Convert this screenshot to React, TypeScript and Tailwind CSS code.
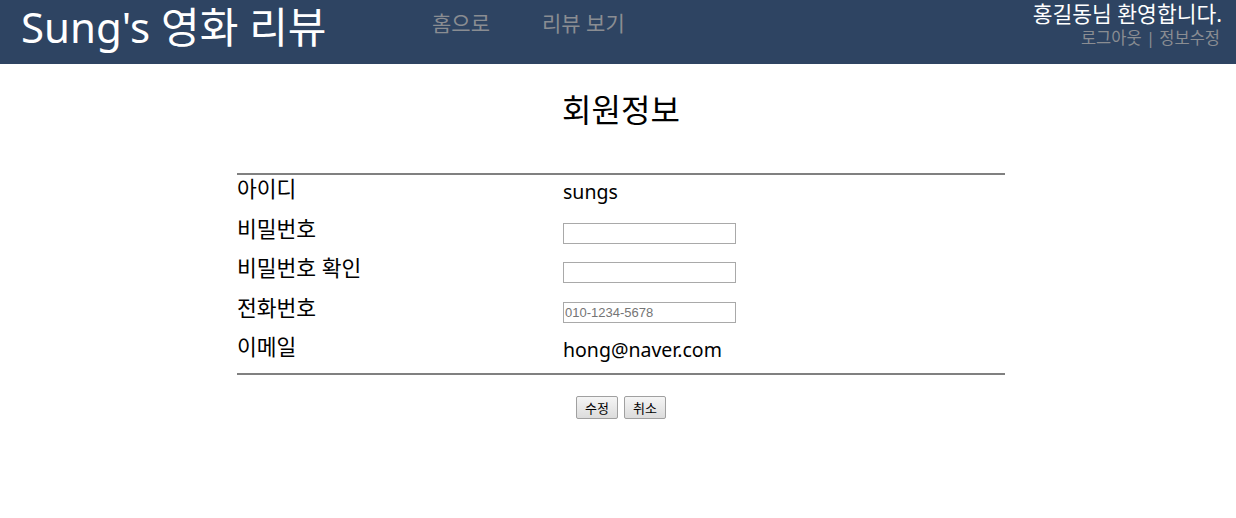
import React from "react";

const font = { fontFamily: '"Noto Sans", "Noto Sans CJK KR", sans-serif' };

export default function App() {
  return (
    <div className="w-[1236px] min-h-[518px] bg-white" style={font}>
      <header className="h-[64px] bg-[#2e4462] flex items-start">
        <div className="w-[410px] pl-[21px] pt-[0px] text-[42px] leading-[54px] text-white whitespace-nowrap">
          Sung's 영화 리뷰
        </div>
        <nav className="flex pt-[8px] text-[21px] leading-[30px] text-[#8a8d92]">
          <a className="ml-[22px] w-[110px]">홈으로</a>
          <a>리뷰 보기</a>
        </nav>
        <div className="ml-auto pr-[14px] flex flex-col items-end">
          <div className="text-[21.5px] leading-[27px] text-white">홍길동님 환영합니다.</div>
          <div className="text-[16.5px] leading-[22px] pr-[2px] text-[#8a8d92]">로그아웃 | 정보수정</div>
        </div>
      </header>
      <main className="flex flex-col items-center pl-[6px]">
        <h1 className="mt-[24px] text-[32px] leading-[44px] text-black">회원정보</h1>
        <div className="mt-[41px] w-[768px] border-y-2 border-[#808080]">
          {[
            ["아이디", <span className="text-[19.5px]">sungs</span>],
            ["비밀번호", <input type="password" className="w-[173px] h-[21px] border border-[#a9a9a9] mt-[8px]" />],
            ["비밀번호 확인", <input type="password" className="w-[173px] h-[21px] border border-[#a9a9a9] mt-[8px]" />],
            [
              "전화번호",
              <input
                placeholder="010-1234-5678"
                className="w-[173px] h-[21px] border border-[#a9a9a9] mt-[8px] px-[1px] text-[13px] placeholder:text-[#757575]"
                style={{ fontFamily: '"Liberation Sans", Arial, sans-serif' }}
              />,
            ],
            ["이메일", <span className="text-[19.5px]">hong@naver.com</span>],
          ].map(([label, value], i) => (
            <div key={i} className="grid grid-cols-[326px_1fr] h-[39.6px]">
              <div className="text-[21.5px] leading-[28px] text-black">{label}</div>
              <div className="leading-[34px] text-black">{value}</div>
            </div>
          ))}
        </div>
        <div className="mt-[21px] flex gap-[6px]" style={{ fontFamily: '"Noto Sans CJK KR", sans-serif' }}>
          <button className="w-[42px] h-[23px] text-[13px] leading-[21px] border border-[#a0a0a0] rounded-[2px] bg-gradient-to-b from-[#f5f5f5] to-[#dcdcdc] text-black">수정</button>
          <button className="w-[42px] h-[23px] text-[13px] leading-[21px] border border-[#a0a0a0] rounded-[2px] bg-gradient-to-b from-[#f5f5f5] to-[#dcdcdc] text-black">취소</button>
        </div>
      </main>
    </div>
  );
}
